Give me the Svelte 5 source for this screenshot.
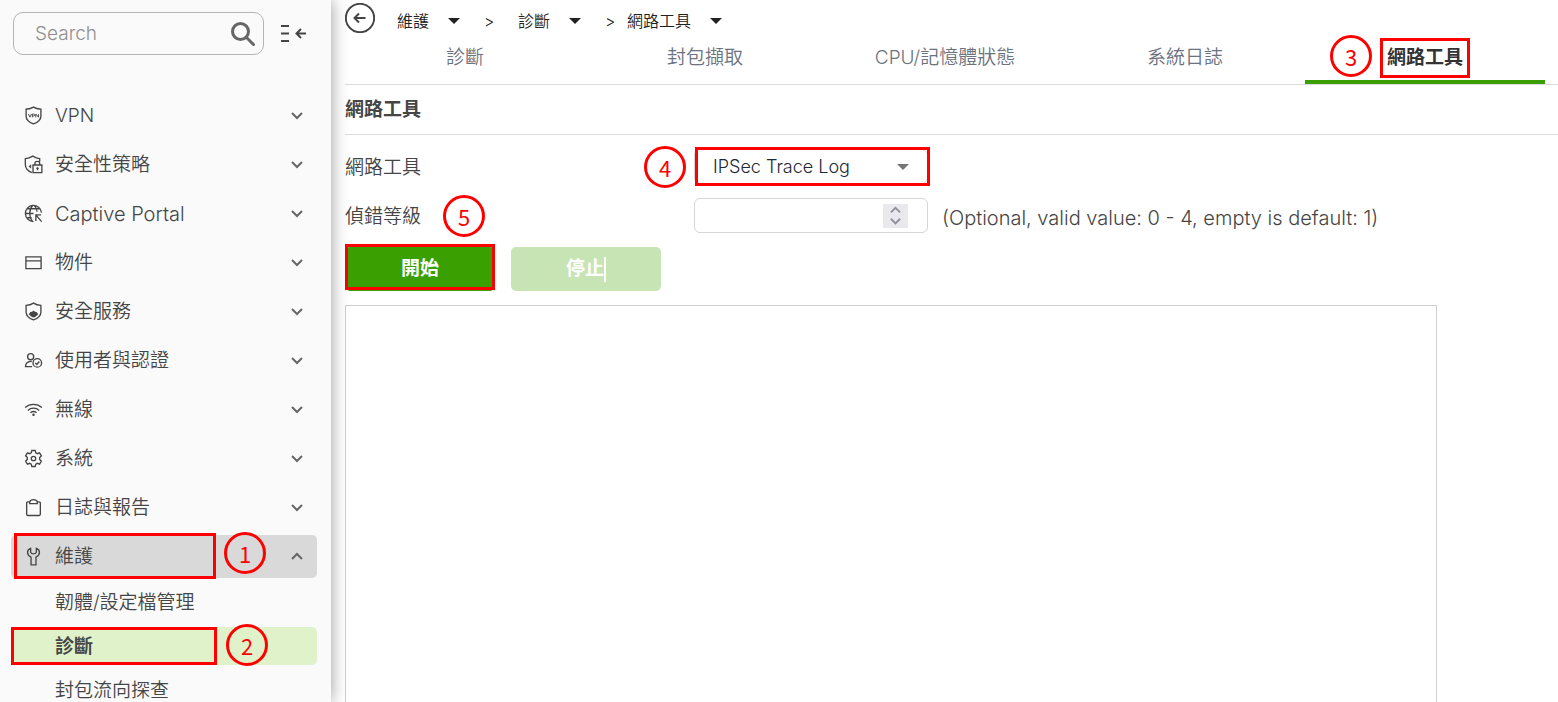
<script lang="ts">
  type NavItem = { icon: string; label: string };

  const nav: NavItem[] = [
    { icon: "vpn", label: "VPN" },
    { icon: "policy", label: "安全性策略" },
    { icon: "portal", label: "Captive Portal" },
    { icon: "object", label: "物件" },
    { icon: "service", label: "安全服務" },
    { icon: "user", label: "使用者與認證" },
    { icon: "wifi", label: "無線" },
    { icon: "system", label: "系統" },
    { icon: "log", label: "日誌與報告" },
    { icon: "wrench", label: "維護" },
  ];
  const subNav = ["韌體/設定檔管理", "診斷", "封包流向探查"];
  const crumbs = ["維護", "診斷", "網路工具"];
  const tabs = ["診斷", "封包擷取", "CPU/記憶體狀態", "系統日誌", "網路工具"];

  let open = $state("維護");
  let search = $state("");
  let tool = $state("IPSec Trace Log");
  let level = $state(null);
  let output = $state("");
</script>

{#snippet icon(name: string)}
  <svg class="icon" viewBox="0 0 20 20" aria-hidden="true">
    {#if name === "vpn"}
      <path d="M10 1.200c2.200 1.400 4.800 2 7.800 2.200v7c0 4-3.400 6.700-7.800 8.400-4.400-1.700-7.800-4.400-7.800-8.400v-7C5.200 3.200 7.800 2.600 10 1.200z" />
      <path class="thin" d="M4.600 8.500l1.600 3.200 1.600-3.200M8.800 12V8.500h1.400c1.500 0 1.500 2 0 2H8.800M12.400 12V8.500l2.800 3.300V8.500" />
    {:else if name === "policy"}
      <path d="M16.500 7V3.800C13.500 3.600 11.500 2.600 9.200 1.200 7 2.600 4.400 3.600 1.400 3.800v6.200c0 4.200 2.800 6.800 6.800 8.600" />
      <path d="M9.500 10.500h9.300v8H9.500zM11.500 10.500V9c0-3 5-3 5 0v1.500M14.200 13v3M13 14h2.500" />
      <path class="solid" d="M7.500 9.800v4.400L4.800 12z" />
    {:else if name === "portal"}
      <path d="M10 18.500A8.500 8.500 0 1 1 18.400 9M9 1.700c-4 4.500-4 12 0 16.700M11 1.700c1.600 1.700 2.500 4 2.800 6.500M1.600 10H10M3.500 5h13M3.500 14.500H8" />
      <path d="M12.500 18v-6.500H18M12.500 11.500l6 7" />
    {:else if name === "object"}
      <path d="M2 4h16v12.500H2zM2 8.200h16" />
    {:else if name === "service"}
      <path d="M10 1.200c2.200 1.400 4.800 2.200 7.800 2.400v6.800c0 4-3.400 6.700-7.800 8.400-4.400-1.700-7.800-4.400-7.800-8.400V3.600c3-.2 5.600-1 7.800-2.400z" />
      <path class="solid" d="M10 9l1.500 1.200 1.700.2.800 1.300 1 .8c-.8 1.600-2.800 3-5 3.900-2.200-.9-4.200-2.300-5-3.900l1-.8.8-1.300 1.700-.2z" />
    {:else if name === "user"}
      <circle cx="7" cy="6" r="3.200" />
      <path d="M8.500 16.500H1.600c0-4 2.400-5.500 6.600-5.500" />
      <circle cx="14" cy="12.500" r="4.500" />
      <path d="M11.800 12.500l1.600 1.700 2.800-3.200" />
    {:else if name === "wifi"}
      <path d="M1.200 8c5-4.600 12.600-4.600 17.600 0M4 11c3.400-3.200 8.600-3.200 12 0M6.800 13.500c1.900-1.600 4.500-1.600 6.400 0" />
      <circle class="solid" cx="10" cy="15.500" r="1.300" />
    {:else if name === "system"}
      <path d="M8.200 1.600h3.600l.6 2.400 1.600.9 2.400-.8 1.900 3.100-1.800 1.800v2l1.800 1.800-1.900 3.100-2.400-.8-1.600.9-.6 2.400H8.200L7.600 16 6 15.100l-2.400.8-1.900-3.100L3.500 11V9L1.700 7.200l1.900-3.100 2.400.8L7.600 4z" />
      <circle cx="10" cy="10" r="2.300" />
    {:else if name === "log"}
      <path d="M6 4H4a1.200 1.200 0 0 0-1.200 1.200v12A1.200 1.200 0 0 0 4 18.400h12a1.200 1.200 0 0 0 1.200-1.200v-12A1.200 1.200 0 0 0 16 4h-2M6 6V4c1-3 7-3 8 0v2z" />
    {:else}
      <path d="M7 1.400C2.600 2.800 2.600 8.400 7.400 10.600v8.200h5.200v-8.200c4.800-2.200 4.800-7.800.4-9.200v4.200c-1 2.200-5 2.200-6 0z" />
    {/if}
  </svg>
{/snippet}

{#snippet chevron(up: boolean)}
  <svg class="chevron" viewBox="0 0 12 12" aria-hidden="true">
    <path d={up ? "M1 8l5-5 5 5" : "M1 3l5 5 5-5"} />
  </svg>
{/snippet}

<div class="app">
  <aside>
    <div class="top">
      <label class="search">
        <input type="text" placeholder="Search" aria-label="Search" bind:value={search} />
        <svg viewBox="0 0 24 24" aria-hidden="true">
          <circle cx="9.500" cy="9.500" r="8" />
          <path d="M15.500 15.500l8 8" />
        </svg>
      </label>
      <button class="collapse" aria-label="Collapse menu">
        <svg viewBox="0 0 26 20" aria-hidden="true">
          <path d="M0 2h8M0 9.500h8M0 17h8M16 9.500h9M20 5l-4.500 4.500L20 14" />
        </svg>
      </button>
    </div>

    <nav>
      {#each nav as item}
        <div class="row">
          <button
            class="item"
            class:open={open === item.label}
            aria-expanded={open === item.label}
            onclick={() => (open = open === item.label ? "" : item.label)}
          >
            {@render icon(item.icon)}
            <span class:latin={item.icon === "portal"}>{item.label}</span>
            {@render chevron(open === item.label)}
          </button>
          {#if item.icon === "wrench"}
            <i class="mark mark-menu"></i>
            <b class="step step-1">1</b>
          {/if}
        </div>
      {/each}

      {#if open === "維護"}
        <div class="sub">
          {#each subNav as label}
            <div class="row">
              <a href="#top" class:current={label === "診斷"}>{label}</a>
              {#if label === "診斷"}
                <i class="mark mark-sub"></i>
                <b class="step step-2">2</b>
              {/if}
            </div>
          {/each}
        </div>
      {/if}
    </nav>
  </aside>

  <main>
    <header>
      <button class="back" aria-label="Back">
        <svg viewBox="0 0 30 30" aria-hidden="true">
          <circle cx="15" cy="15" r="14.200" />
          <path d="M20.500 15h-11M14 10.500L9.500 15l4.500 4.500" />
        </svg>
      </button>
      <div class="crumbs">
        {#each crumbs as crumb, i}
          {#if i > 0}
            <span class="sep" class:tight={i === 2}>&gt;</span>
          {/if}
          <button class="crumb">
            {crumb}
            <svg class="caret" viewBox="0 0 12 6" aria-hidden="true"><path d="M0 0h12L6 6z" /></svg>
          </button>
        {/each}
      </div>
    </header>

    <div class="tabs">
      {#each tabs as tab, i}
        <button class="tab" class:active={i === 4}>
          {tab}
          {#if i === 4}
            <i class="mark mark-tab"></i>
            <b class="step step-3">3</b>
          {/if}
        </button>
      {/each}
    </div>

    <h2>網路工具</h2>

    <form onsubmit={(e) => e.preventDefault()}>
      <div class="field">
        <label for="tool">網路工具</label>
        <div class="control">
          <select id="tool" bind:value={tool}>
            <option>IPSec Trace Log</option>
          </select>
          <svg class="caret" viewBox="0 0 12 6" aria-hidden="true"><path d="M0 0h12L6 6z" /></svg>
          <i class="mark mark-tool"></i>
          <b class="step step-4">4</b>
        </div>
      </div>

      <div class="field">
        <label for="level">偵錯等級 <b class="step step-5">5</b></label>
        <div class="control">
          <input id="level" type="number" min="0" max="4" bind:value={level} />
          <span class="spin" aria-hidden="true">{@render chevron(true)}{@render chevron(false)}</span>
        </div>
        <span class="hint">(Optional, valid value: 0 - 4, empty is default: 1)</span>
      </div>

      <div class="actions">
        <button class="start">開始<i class="mark mark-start"></i></button>
        <button class="stop" disabled>停止<span class="cursor"></span></button>
      </div>

      <textarea aria-label="Output" readonly bind:value={output}></textarea>
    </form>
  </main>
</div>

<style>
  :global(body) {
    margin: 0;
    overflow: hidden;
    background: #fff;
  }

  .app {
    --red: #fe0000;
    --green: #3a9f00;
    display: flex;
    height: 100vh;
    overflow: hidden;
    font-family: Inter, "Noto Sans CJK TC", sans-serif;
    font-size: 19px;
    font-weight: 350;
    line-height: 26px;
    color: #454545;
  }

  button,
  input,
  select {
    box-sizing: border-box;
    font: inherit;
    color: inherit;
  }

  button {
    padding: 0;
    border: 0;
    background: none;
    cursor: pointer;
  }

  svg {
    flex: none;
    fill: none;
    stroke: currentColor;
  }

  aside {
    box-sizing: border-box;
    flex: none;
    width: 331px;
    padding: 12px 14px 0 11px;
    background: #fafafa;
    box-shadow: 0 0 16px rgba(0, 0, 0, 0.4);
    z-index: 1;
  }

  .top {
    display: flex;
    align-items: center;
    gap: 17px;
    margin: 0 10px 39px 2px;
  }

  .search {
    box-sizing: border-box;
    display: flex;
    align-items: center;
    flex: 1;
    min-width: 0;
    height: 43px;
    padding: 0 8px 0 21px;
    border: 1px solid #b5b5b5;
    border-radius: 10px;
  }

  .search input {
    flex: 1;
    min-width: 0;
    padding: 0;
    border: 0;
    outline: 0;
    background: none;
    font-weight: 300;
  }

  .search input::placeholder {
    color: #8f8f8f;
  }

  .search svg {
    width: 24px;
    height: 24px;
    color: #666;
    stroke-width: 3;
  }

  .collapse {
    display: flex;
  }

  .collapse svg {
    width: 26px;
    height: 20px;
    stroke-width: 2;
  }

  nav {
    display: flex;
    flex-direction: column;
    gap: 6px;
  }

  .row {
    position: relative;
  }

  .item {
    display: flex;
    align-items: center;
    gap: 12px;
    width: 100%;
    height: 43px;
    padding: 0 14px 0 13px;
    border-radius: 5px;
    text-align: left;
  }

  .item.open {
    background: #d9d9d9;
  }

  .item span {
    flex: 1;
  }

  .item .latin {
    font-size: 20px;
    font-weight: 300;
  }

  .icon {
    width: 19px;
    height: 19px;
    stroke-width: 1.4;
  }

  .icon .thin {
    stroke-width: 1;
  }

  .icon .solid {
    fill: currentColor;
    stroke: none;
  }

  .chevron {
    width: 12px;
    height: 12px;
    color: #666;
    stroke-width: 2;
  }

  .sub {
    display: flex;
    flex-direction: column;
    gap: 6px;
    margin-top: -1px;
  }

  .sub a {
    display: block;
    padding: 7px 0 5px 44px;
    border-radius: 5px;
    color: inherit;
    text-decoration: none;
  }

  .sub a.current {
    background: #dff2ca;
    font-weight: 700;
  }

  main {
    flex: 1;
    min-width: 0;
    padding-left: 14px;
  }

  header {
    display: flex;
    align-items: center;
    gap: 22px;
    height: 36px;
  }

  .back {
    display: flex;
  }

  .back svg {
    width: 30px;
    height: 30px;
    stroke-width: 2;
  }

  .crumbs {
    display: flex;
    align-items: center;
    padding-top: 6px;
    font-size: 16px;
    color: #222;
  }

  .crumb {
    display: flex;
    align-items: center;
    gap: 19px;
  }

  .caret {
    width: 12px;
    height: 6px;
  }

  .caret path {
    fill: currentColor;
    stroke: none;
  }

  .sep {
    width: 10px;
    margin: 0 24px;
  }

  .sep.tight {
    margin-right: 12px;
  }

  .tabs {
    display: flex;
    height: 48px;
    padding-right: 13px;
    border-bottom: 1px solid #dcdcdc;
  }

  .tab {
    position: relative;
    flex: 1;
    border-bottom: 4px solid transparent;
    color: #6b7280;
  }

  .tab.active {
    border-color: var(--green);
    font-weight: 700;
    color: #333;
  }

  h2 {
    margin: 0;
    padding: 12px 0 11px;
    border-bottom: 1px solid #dcdcdc;
    font-size: 19px;
    font-weight: 700;
  }

  form {
    display: flex;
    flex-direction: column;
    gap: 14px;
    padding-top: 14px;
  }

  .field {
    display: flex;
    align-items: center;
    height: 35px;
  }

  .field label {
    position: relative;
    width: 349px;
    padding-top: 2px;
  }

  .control {
    position: relative;
    width: 234px;
    height: 35px;
  }

  .control input,
  .control select {
    width: 100%;
    height: 100%;
    padding: 0 40px 0 18px;
    border: 1px solid #d5d5da;
    border-radius: 6px;
    background: #fff;
    color: #212936;
    appearance: none;
  }

  .control select {
    font-size: 18px;
    font-weight: 300;
  }

  .control input::-webkit-inner-spin-button {
    appearance: none;
  }

  .control .caret {
    position: absolute;
    top: 15px;
    right: 19px;
    color: #757575;
  }

  .spin {
    position: absolute;
    top: 6px;
    right: 20px;
    display: flex;
    flex-direction: column;
    align-items: center;
    justify-content: center;
    width: 25px;
    height: 24px;
    background: #e9e9ed;
    pointer-events: none;
  }

  .spin .chevron {
    width: 11px;
    height: 11px;
    color: #8f8f9d;
  }

  .hint {
    margin: 4px 0 0 14px;
    font-size: 20px;
    font-weight: 300;
  }

  .actions {
    display: flex;
    gap: 16px;
  }

  .actions button {
    position: relative;
    width: 150px;
    height: 44px;
    border-radius: 5px;
    background: var(--green);
    color: #fff;
    font-weight: 700;
  }

  .actions .stop {
    display: flex;
    align-items: center;
    justify-content: center;
    background: #c7e4b5;
  }

  .cursor {
    width: 2px;
    height: 25px;
    background: #fff;
  }

  textarea {
    box-sizing: border-box;
    width: 90%;
    height: 420px;
    margin: 0;
    border: 1px solid #d0d0d0;
    outline: 0;
    resize: none;
  }

  /* numbered walkthrough marks drawn over the page */
  .mark {
    position: absolute;
    box-sizing: border-box;
    border: 3px solid var(--red);
    pointer-events: none;
  }

  .step {
    position: absolute;
    box-sizing: border-box;
    width: 42px;
    height: 42px;
    border: 3px solid var(--red);
    border-radius: 50%;
    font-family: "Noto Sans CJK TC", sans-serif;
    font-size: 22px;
    font-weight: 400;
    line-height: 36px;
    text-align: center;
    color: var(--red);
    pointer-events: none;
  }

  .mark-menu {
    top: -2px;
    left: 3px;
    width: 202px;
    height: 46px;
  }

  .step-1 {
    top: -3px;
    left: 213px;
  }

  .mark-sub {
    top: 0;
    left: 0;
    width: 206px;
    height: 38px;
  }

  .step-2 {
    top: -3px;
    left: 215px;
  }

  .mark-tab {
    top: 2px;
    left: calc(50% - 45px);
    width: 90px;
    height: 40px;
  }

  .step-3 {
    top: -1px;
    left: calc(50% - 95px);
  }

  .mark-tool {
    top: -2px;
    left: 1px;
    width: 235px;
    height: 39px;
  }

  .step-4 {
    top: -3px;
    left: -50px;
  }

  .step-5 {
    top: -7px;
    left: 98px;
  }

  .mark-start {
    top: -3px;
    left: 0;
    width: 150px;
    height: 46px;
  }
</style>
